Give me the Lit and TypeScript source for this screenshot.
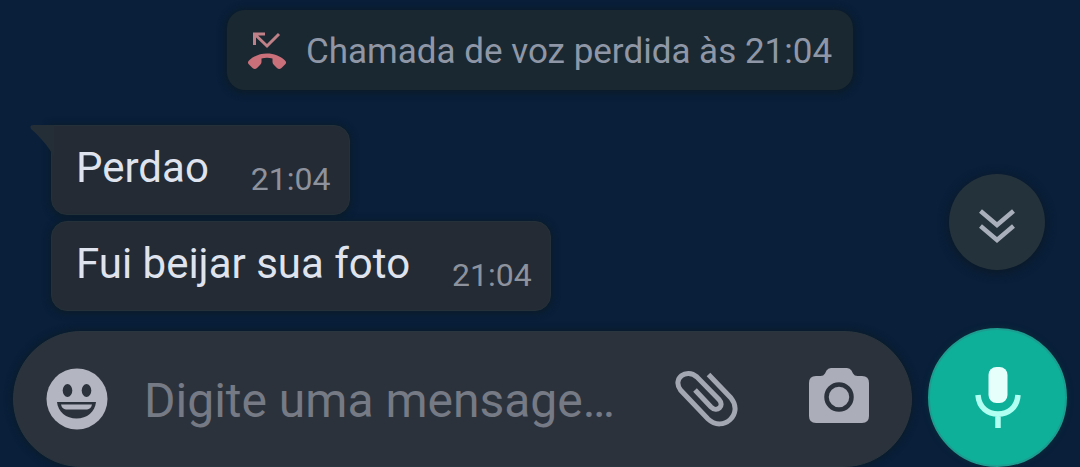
import { LitElement, html, css } from "lit";
import { customElement, property } from "lit/decorators.js";

@customElement("chat-bubble")
class ChatBubble extends LitElement {
  @property() text = "";
  @property() time = "";
  @property({ type: Boolean }) tail = false;

  static styles = css`
    :host {
      display: block;
    }
    .bubble {
      position: relative;
      display: flex;
      align-items: flex-end;
      gap: 42px;
      padding: 17px 18px 21px 24px;
      border-radius: 16px;
      background: #242b34;
      border: 1px solid #24313a;
      box-shadow: 0 1px 6px 2px #0b1c2a;
    }
    .tail {
      border-top-left-radius: 0;
    }
    .corner {
      position: absolute;
      top: -1px;
      left: -22px;
      width: 24px;
      height: 32px;
      fill: #242e37;
    }
    .text {
      margin: 0;
      font-size: 42px;
      line-height: 50px;
      color: #dfe3ee;
    }
    .time {
      font-size: 32px;
      line-height: 28px;
      color: #8d929d;
    }
  `;

  render() {
    return html`
      <div class="bubble ${this.tail ? "tail" : ""}">
        ${this.tail
          ? html`<svg class="corner" viewBox="0 0 24 32" aria-hidden="true">
              <path d="M3 0H24V32C19 22 10 12 1 4Q-1 0 3 0Z" />
            </svg>`
          : null}
        <p class="text">${this.text}</p>
        <time class="time">${this.time}</time>
      </div>
    `;
  }
}

@customElement("app-root")
class AppRoot extends LitElement {
  private messages = [
    { text: "Perdao", time: "21:04" },
    { text: "Fui beijar sua foto", time: "21:04" },
  ];

  static styles = css`
    :host {
      display: block;
      font-family: Roboto, "Liberation Sans", sans-serif;
    }
    * {
      box-sizing: border-box;
    }
    .page {
      position: relative;
      display: flex;
      flex-direction: column;
      min-height: 100vh;
      overflow: hidden;
      background: #091f3a;
    }
    button {
      display: grid;
      place-items: center;
      flex: none;
      border: 0;
      padding: 0;
      background: none;
      cursor: pointer;
    }
    .chat {
      position: relative;
      flex: 1;
      display: flex;
      flex-direction: column;
      align-items: flex-start;
      gap: 35px;
      padding: 10px 16px 16px;
    }
    .notice {
      align-self: center;
      display: flex;
      align-items: center;
      gap: 19px;
      padding: 18px 21px 14px 20px;
      border-radius: 18px;
      background: #1a2831;
      box-shadow: 0 1px 6px 3px #0b1c2a;
      font-size: 35px;
      line-height: 48px;
      color: #8f97a7;
    }
    .missed {
      flex: none;
      width: 40px;
      height: 40px;
    }
    .messages {
      display: flex;
      flex-direction: column;
      align-items: flex-start;
      gap: 6px;
      margin: 0;
      padding: 0 0 0 35px;
      list-style: none;
    }
    .jump {
      position: absolute;
      right: 35px;
      bottom: 58px;
      width: 96px;
      height: 96px;
      padding-top: 8px;
      border-radius: 50%;
      background: #24323c;
      box-shadow: 0 2px 8px 2px #0b1a29;
    }
    .footer {
      display: flex;
      align-items: flex-end;
      gap: 16px;
      padding: 0 13px;
      height: 139px;
    }
    .composer {
      flex: 1;
      min-width: 0;
      display: flex;
      align-items: center;
      height: 136px;
      padding: 0 42px 0 32px;
      border-radius: 68px;
      background: #2c323c;
      border: 1px solid #29363f;
      box-shadow: 0 0 6px 2px #0b1c2a;
    }
    .entry {
      flex: 1;
      min-width: 0;
      margin: 0 24px 0 36px;
      padding: 4px 0 0;
      border: 0;
      outline: 0;
      background: none;
      font-family: inherit;
      font-size: 48px;
      line-height: 60px;
      color: #dfe3ee;
    }
    .entry::placeholder {
      color: #757a85;
      opacity: 1;
    }
    .clip {
      margin-right: 70px;
    }
    .camera {
      padding-bottom: 6px;
    }
    .mic {
      width: 139px;
      height: 139px;
      border-radius: 50%;
      background: #0fb09a;
      border: 2px solid #1d9c90;
      box-shadow: 0 0 5px 1px #0b2c3a;
    }
  `;

  render() {
    return html`
      <div class="page">
        <main class="chat">
          <div class="notice">
            <svg class="missed" viewBox="0 0 40 40" fill="none" aria-hidden="true">
              <path
                d="M18 2H7.500V13M7.500 2L20 14L32 2"
                stroke="#bf8088"
                stroke-width="3"
              />
              <path
                d="M20 21.500C13 21.500 7 24 2.500 28Q0 30 1.500 32L5.500 36Q8 38 10 36L13 33Q14.500 31.500 14.500 30V26.500Q20 25 25.500 26.500V30Q25.500 31.500 27 33L30 36Q32 38 34.500 36L38.500 32Q40 30 37.500 28C33 24 27 21.500 20 21.500Z"
                fill="#c9707a"
              />
            </svg>
            <span>Chamada de voz perdida às 21:04</span>
          </div>
          <ul class="messages">
            ${this.messages.map(
              (m, i) => html`<li>
                <chat-bubble .text=${m.text} .time=${m.time} ?tail=${i === 0}></chat-bubble>
              </li>`
            )}
          </ul>
          <button class="jump" aria-label="Ir para o fim">
            <svg width="40" height="36" viewBox="0 0 40 36" fill="none" stroke="#a9afbb" stroke-width="4.500" aria-hidden="true">
              <path d="M3.500 3L20 17L36.500 3M3.500 18L20 32L36.500 18" />
            </svg>
          </button>
        </main>
        <footer class="footer">
          <div class="composer">
            <button aria-label="Emoji">
              <svg width="62" height="62" viewBox="0 0 62 62" aria-hidden="true">
                <circle cx="31" cy="31" r="30.500" fill="#b3b6c0" />
                <ellipse cx="21.500" cy="22.500" rx="4.800" ry="6.500" fill="#2c323c" />
                <ellipse cx="40.500" cy="22.500" rx="4.800" ry="6.500" fill="#2c323c" />
                <path d="M11 34H50C49 44 41 50.500 30.500 50.500S12 44 11 34Z" fill="#2c323c" />
                <path d="M15 36.500H46Q45 41 41 41.500H20Q16 41 15 36.500Z" fill="#b3b6c0" />
              </svg>
            </button>
            <input class="entry" type="text" aria-label="Mensagem" placeholder="Digite uma mensage…" />
            <button class="clip" aria-label="Anexar">
              <svg width="64" height="58" viewBox="0 0 64 58" fill="none" stroke="#a3a7b1" stroke-width="5" aria-hidden="true">
                <path
                  d="M20 20L36 37C42 43 50 36 44 29.500L22 7C11 -2.500 -3 9 5.500 20L33 49C48 63 69 44 56 28L33.500 4.500"
                />
              </svg>
            </button>
            <button class="camera" aria-label="Câmera">
              <svg width="60" height="58" viewBox="0 0 60 58" aria-hidden="true">
                <path
                  d="M22 1H38Q41 1 42.500 3.500L44 6.500Q45.500 9 48.500 9H53Q60 9 60 16V49Q60 56 53 56H7Q0 56 0 49V16Q0 9 7 9H11.500Q14.500 9 16 6.500L17.500 3.500Q19 1 22 1Z"
                  fill="#abaeb8"
                />
                <circle cx="30" cy="30" r="12.500" fill="#abaeb8" stroke="#2c323c" stroke-width="4.500" />
              </svg>
            </button>
          </div>
          <button class="mic" aria-label="Gravar áudio">
            <svg width="46" height="64" viewBox="0 0 46 64" aria-hidden="true">
              <rect x="13.500" y="1" width="19" height="36" rx="8" fill="#e6fffb" />
              <path
                d="M3 29C4 42 13 48 23 48S42 42 43 29M23 48V62"
                fill="none"
                stroke="#b0fff2"
                stroke-width="5.500"
              />
            </svg>
          </button>
        </footer>
      </div>
    `;
  }
}
